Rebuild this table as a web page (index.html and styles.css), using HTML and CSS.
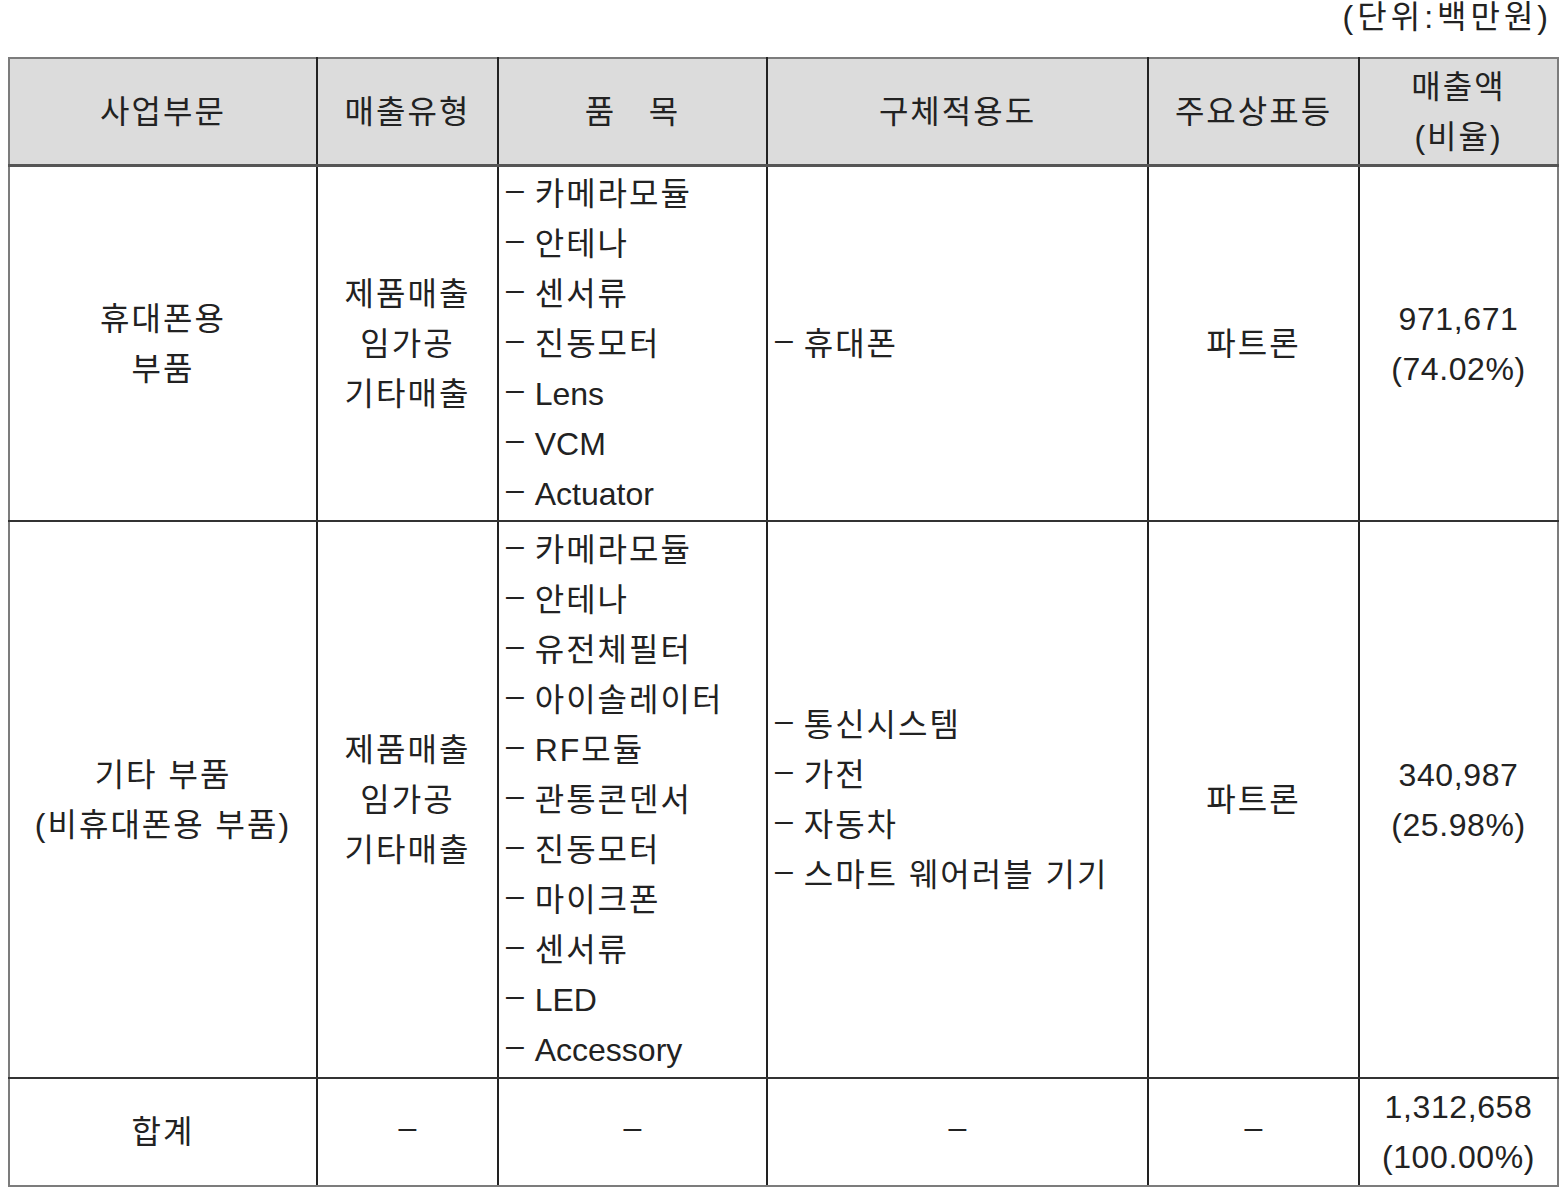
FILE: index.html
```html
<!DOCTYPE html>
<html lang="ko">
<head>
<meta charset="utf-8">
<title>사업부문별 매출</title>
<link rel="stylesheet" href="styles.css">
</head>
<body>
<div class="page">
  <div class="unit">(단위:백만원)</div>
  <table class="sales">
    <colgroup>
      <col class="c1"><col class="c2"><col class="c3"><col class="c4"><col class="c5"><col class="c6">
    </colgroup>
    <thead>
      <tr class="head">
        <th>사업부문</th>
        <th>매출유형</th>
        <th>품&nbsp;&nbsp;&nbsp;목</th>
        <th>구체적용도</th>
        <th>주요상표등</th>
        <th>매출액<br>(비율)</th>
      </tr>
    </thead>
    <tbody>
      <tr class="r1">
        <td class="ctr">휴대폰용<br>부품</td>
        <td class="ctr">제품매출<br>임가공<br>기타매출</td>
        <td class="list"><span class="d">–</span> 카메라모듈<br><span class="d">–</span> 안테나<br><span class="d">–</span> 센서류<br><span class="d">–</span> 진동모터<br><span class="d">–</span> <span class="lat">Lens</span><br><span class="d">–</span> <span class="lat">VCM</span><br><span class="d">–</span> <span class="lat">Actuator</span></td>
        <td class="list"><span class="d">–</span> 휴대폰</td>
        <td class="ctr">파트론</td>
        <td class="ctr num">971,671<br>(74.02%)</td>
      </tr>
      <tr class="r2">
        <td class="ctr">기타 부품<br>(비휴대폰용 부품)</td>
        <td class="ctr">제품매출<br>임가공<br>기타매출</td>
        <td class="list"><span class="d">–</span> 카메라모듈<br><span class="d">–</span> 안테나<br><span class="d">–</span> 유전체필터<br><span class="d">–</span> 아이솔레이터<br><span class="d">–</span> RF모듈<br><span class="d">–</span> 관통콘덴서<br><span class="d">–</span> 진동모터<br><span class="d">–</span> 마이크폰<br><span class="d">–</span> 센서류<br><span class="d">–</span> <span class="lat">LED</span><br><span class="d">–</span> <span class="lat">Accessory</span></td>
        <td class="list"><span class="d">–</span> 통신시스템<br><span class="d">–</span> 가전<br><span class="d">–</span> 자동차<br><span class="d">–</span> 스마트 웨어러블 기기</td>
        <td class="ctr">파트론</td>
        <td class="ctr num">340,987<br>(25.98%)</td>
      </tr>
      <tr class="total">
        <td class="ctr">합계</td>
        <td class="ctr"><span class="d">–</span></td>
        <td class="ctr"><span class="d">–</span></td>
        <td class="ctr"><span class="d">–</span></td>
        <td class="ctr"><span class="d">–</span></td>
        <td class="ctr num">1,312,658<br>(100.00%)</td>
      </tr>
    </tbody>
  </table>
</div>
</body>
</html>
```
FILE: styles.css
```css
html, body {
  margin: 0;
  padding: 0;
  background: #ffffff;
}
body {
  font-family: "Liberation Sans", "Noto Sans CJK KR", sans-serif;
  font-size: 32px;
  letter-spacing: 2px;
  color: #222222;
}
.page {
  width: 1564px;
}
.unit {
  height: 57px;
  line-height: 34px;
  text-align: right;
  padding-right: 12px;
  box-sizing: border-box;
  letter-spacing: 4px;
}
.sales {
  margin-left: 8px;
  width: 1549px;
  border-collapse: collapse;
  table-layout: fixed;
  border: 2px solid #7c7c7c;
}
.c1 { width: 308px; }
.c2 { width: 181px; }
.c3 { width: 269px; }
.c4 { width: 381px; }
.c5 { width: 211px; }
.c6 { width: 199px; }
.sales th,
.sales td {
  border-left: 2px solid #222222;
  border-right: 2px solid #222222;
  border-top: 2px solid #333333;
  border-bottom: 2px solid #333333;
  padding: 0;
  line-height: 50px;
  vertical-align: middle;
  font-weight: normal;
}
.sales th:first-child,
.sales td:first-child {
  border-left: 2px solid #7c7c7c;
}
.sales th:last-child,
.sales td:last-child {
  border-right: 2px solid #7c7c7c;
}
.head th {
  border-top: 2px solid #7c7c7c;
  border-bottom: 3px solid #555555;
  background: #dcdcdc;
  height: 105px;
  text-align: center;
}
.total td {
  border-bottom: 2px solid #7c7c7c;
}
.r1 td { height: 353px; }
.r2 td { height: 555px; }
.total td { height: 106px; }
.ctr {
  text-align: center;
}
.sales td.list {
  text-align: left;
  padding-left: 7px;
  white-space: nowrap;
}
.d {
  letter-spacing: 0;
  vertical-align: 5px;
  line-height: 1;
}
.lat {
  letter-spacing: 0;
}
.num {
  letter-spacing: 0.6px;
}
```
